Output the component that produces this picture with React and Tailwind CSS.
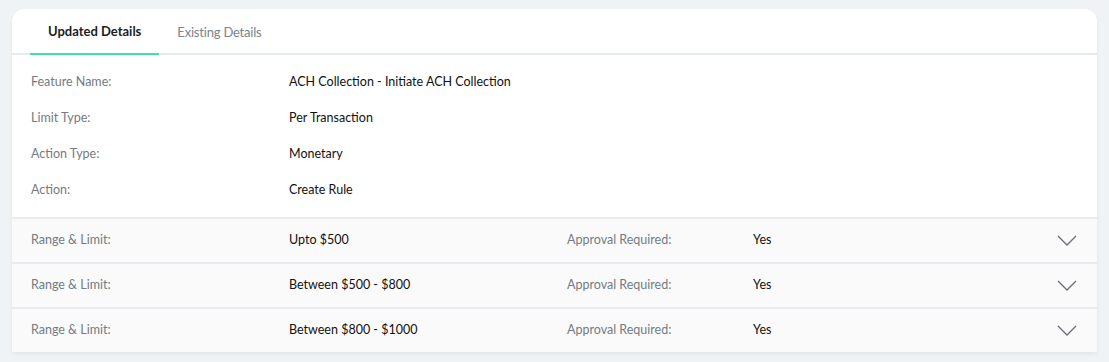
const details = [
  ['Feature Name:', 'ACH Collection - Initiate ACH Collection'],
  ['Limit Type:', 'Per Transaction'],
  ['Action Type:', 'Monetary'],
  ['Action:', 'Create Rule'],
];

const ranges = ['Upto $500', 'Between $500 - $800', 'Between $800 - $1000'];

export default function App() {
  return (
    <div className="min-h-[362px] bg-[#f0f3f6] pt-[9px] px-3 font-['Lato','Open_Sans',sans-serif] text-[12.5px]">
      <div className="bg-white rounded-t-[12px] shadow-[0_2px_4px_rgba(0,0,0,0.06)]">
        {/* Tabs */}
        <div className="flex h-[46px] items-end border-b-2 border-[#e6ebf1] px-[18px] text-[13px]">
          <button className="h-[46px] px-[18px] pt-[2px] -mb-[2px] border-b-2 border-[#3ee0a6] font-bold text-[#1b1d21]">
            Updated Details
          </button>
          <button className="h-[46px] px-[18px] pt-[2px] -mb-[2px] text-[#7b838c] tracking-[-0.2px]">
            Existing Details
          </button>
        </div>

        {/* Details */}
        <div className="py-[9px] px-[19px]">
          {details.map(([label, value]) => (
            <div key={label} className="flex h-9 items-center">
              <span className="w-[258px] text-[#737b84]">{label}</span>
              <span className="text-[#111]">{value}</span>
            </div>
          ))}
        </div>

        {/* Range rows */}
        {ranges.map((r) => (
          <div key={r} className="flex h-[45px] items-center border-t-2 border-[#e8ecf1] bg-[#fafafa] pl-[19px] pr-5">
            <span className="w-[258px] text-[#737b84]">Range &amp; Limit:</span>
            <span className="w-[278px] text-[#111]">{r}</span>
            <span className="w-[186px] text-[#737b84]">Approval Required:</span>
            <span className="flex-1 text-[#111]">Yes</span>
            <svg width="20" height="11" viewBox="0 0 20 11" fill="none" className="text-[#6b6b78]">
              <path d="M1 1l9 9 9-9" stroke="currentColor" strokeWidth="1.3" />
            </svg>
          </div>
        ))}
      </div>
    </div>
  );
}
